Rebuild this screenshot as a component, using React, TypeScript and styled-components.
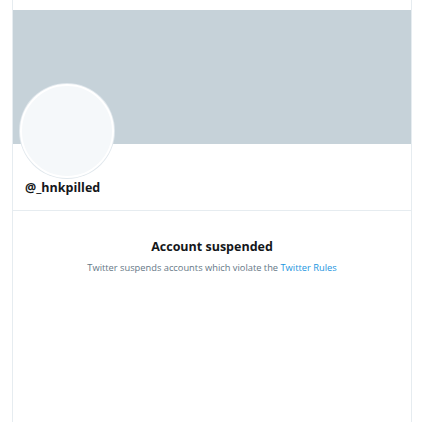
import React from "react";
import styled, { createGlobalStyle } from "styled-components";

const Global = createGlobalStyle`
  html, body { margin: 0; padding: 0; background: #fff; }
  body { font-family: "Open Sans", "Noto Sans", sans-serif; }
`;

const Column = styled.div`
  margin-left: 12px;
  width: 398px;
  min-height: 422px;
  border-left: 1px solid #e6ecf0;
  border-right: 1px solid #e6ecf0;
  padding-top: 10px;
  box-sizing: content-box;
`;

const Header = styled.div`
  position: relative;
`;

const Banner = styled.div`
  height: 134px;
  background: #c6d2d9;
`;

const Avatar = styled.div`
  position: absolute;
  left: 7px;
  top: 74px;
  width: 90px;
  height: 90px;
  border-radius: 50%;
  background: #f5f8fa;
  border: 2px solid #fff;
  box-shadow: 0 0 0 1px #e1e8ed;
`;

const Handle = styled.div`
  padding: 35px 0 0 12px;
  height: 31px;
  font-size: 12.5px;
  font-weight: 700;
  color: #14171a;
  border-bottom: 1px solid #e6ecf0;
`;

const Message = styled.div`
  padding-top: 28px;
  text-align: center;
`;

const Title = styled.div`
  font-size: 12.5px;
  font-weight: 700;
  color: #14171a;
  line-height: 16px;
`;

const Sub = styled.div`
  margin-top: 7px;
  font-size: 9.3px;
  line-height: 12px;
  color: #657786;
`;

const Link = styled.a`
  color: #1b95e0;
  text-decoration: none;
`;

export default function App() {
  return (
    <>
      <Global />
      <Column>
        <Header>
          <Banner />
          <Avatar />
          <Handle>@_hnkpilled</Handle>
        </Header>
        <Message>
          <Title>Account suspended</Title>
          <Sub>
            Twitter suspends accounts which violate the <Link>Twitter Rules</Link>
          </Sub>
        </Message>
      </Column>
    </>
  );
}
